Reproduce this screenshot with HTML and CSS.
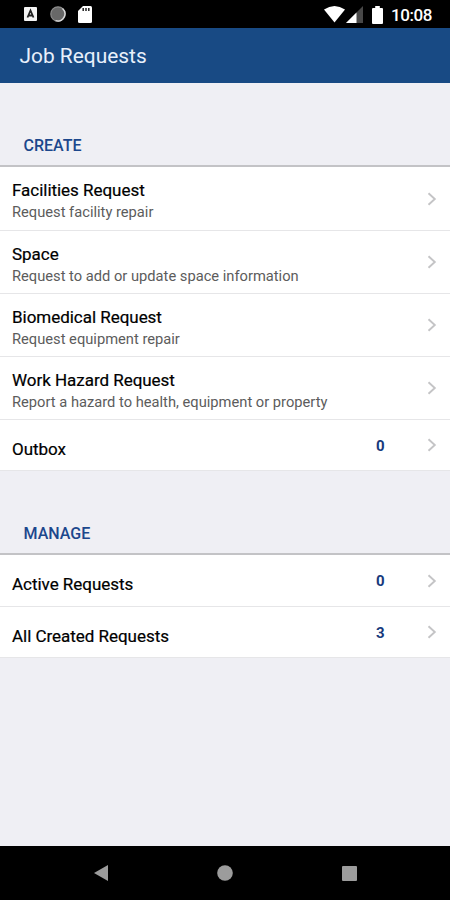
FILE: index.html
```html
<!DOCTYPE html>
<html lang="en">
<head>
    <meta charset="UTF-8">
    <meta name="viewport" content="width=device-width, initial-scale=1.0">
    <title>Job Requests</title>
    <link rel="stylesheet" href="styles.css">
</head>
<body>
    <svg class="symbols" width="0" height="0">
        <symbol id="chevron" viewBox="0 0 10 14">
            <path d="M1.5 1.2L7.8 7L1.5 12.8" fill="none" stroke="#c4c4c6" stroke-width="1.9"/>
        </symbol>
    </svg>
    <div class="status-bar">
        <div class="status-icons">
            <svg width="13" height="14" viewBox="0 0 13 14">
                <rect width="13" height="14" rx="1" fill="#f4f4f4"/>
                <path d="M3.5 10.5L6.5 3.5L9.5 10.5M4.5 8.5H8.5" fill="none" stroke="#222" stroke-width="1.8"/>
            </svg>
            <svg class="sync" width="16" height="16" viewBox="0 0 16 16">
                <circle cx="8" cy="8" r="7.2" fill="#686868" stroke="#8c8c8c" stroke-width="1.2"/>
                <path d="M12.5 2.5A7.2 7.2 0 0 1 5.5 14.7" fill="none" stroke="#ddd" stroke-width="1.3"/>
            </svg>
            <svg width="14" height="17" viewBox="0 0 14 17">
                <path d="M5 0H12.5Q14 0 14 1.5V15.5Q14 17 12.5 17H1.5Q0 17 0 15.5V5Z" fill="#fff"/>
                <path d="M5.2 2V5M8 2V5M10.8 2V5" stroke="#222" stroke-width="1.5"/>
            </svg>
        </div>
        <div class="status-right">
            <svg width="21" height="17" viewBox="0 0 21 17">
                <path d="M0 3.6Q10.5 -3.4 21 3.6L10.5 16.5Z" fill="#fff"/>
            </svg>
            <svg class="signal" width="17" height="17" viewBox="0 0 17 17">
                <path d="M0 17L17 0V17Z" fill="#484848"/>
                <path d="M0 17L10.5 6.5V17Z" fill="#fff"/>
            </svg>
            <svg class="battery" width="11" height="18" viewBox="0 0 11 18">
                <path d="M3.2 0H7.8V2H10Q11 2 11 3V17Q11 18 10 18H1Q0 18 0 17V3Q0 2 1 2H3.2Z" fill="#fff"/>
            </svg>
            <span class="clock">10:08</span>
        </div>
    </div>
    <header class="header">
        <h1>Job Requests</h1>
    </header>
    <main>
        <h2>CREATE</h2>
        <ul class="list">
            <li class="item">
                <div class="text">
                    <div class="name">Facilities Request</div>
                    <div class="desc">Request facility repair</div>
                </div>
                <svg class="chevron"><use href="#chevron"/></svg>
            </li>
            <li class="item">
                <div class="text">
                    <div class="name">Space</div>
                    <div class="desc">Request to add or update space information</div>
                </div>
                <svg class="chevron"><use href="#chevron"/></svg>
            </li>
            <li class="item">
                <div class="text">
                    <div class="name">Biomedical Request</div>
                    <div class="desc">Request equipment repair</div>
                </div>
                <svg class="chevron"><use href="#chevron"/></svg>
            </li>
            <li class="item">
                <div class="text">
                    <div class="name">Work Hazard Request</div>
                    <div class="desc">Report a hazard to health, equipment or property</div>
                </div>
                <svg class="chevron"><use href="#chevron"/></svg>
            </li>
            <li class="item short">
                <div class="name">Outbox</div>
                <span class="count">0</span>
                <svg class="chevron"><use href="#chevron"/></svg>
            </li>
        </ul>
        <h2>MANAGE</h2>
        <ul class="list">
            <li class="item short">
                <div class="name">Active Requests</div>
                <span class="count">0</span>
                <svg class="chevron"><use href="#chevron"/></svg>
            </li>
            <li class="item short">
                <div class="name">All Created Requests</div>
                <span class="count">3</span>
                <svg class="chevron"><use href="#chevron"/></svg>
            </li>
        </ul>
    </main>
    <footer class="nav-bar">
        <svg width="14" height="16" viewBox="0 0 14 16"><path d="M0 8L14 0V16Z" fill="#9c9c9c"/></svg>
        <svg width="16" height="16" viewBox="0 0 16 16"><circle cx="8" cy="8" r="7.8" fill="#9c9c9c"/></svg>
        <svg width="15" height="15" viewBox="0 0 15 15"><rect width="15" height="15" rx="1" fill="#9c9c9c"/></svg>
    </footer>
</body>
</html>
```

FILE: styles.css
```css
* {
    box-sizing: border-box;
}

body {
    display: flex;
    flex-direction: column;
    height: 900px;
    margin: 0;
    font-family: Roboto, sans-serif;
    background-color: #efeff4;
    overflow: hidden;
}

h1, h2, ul {
    margin: 0;
    padding: 0;
    font-weight: normal;
}

.symbols {
    display: none;
}

/* Status bar */
.status-bar {
    display: flex;
    flex: none;
    justify-content: space-between;
    height: 28px;
    padding: 0 18px 0 24px;
    background-color: #000;
    color: #fff;
}

.status-icons, .status-right {
    display: flex;
    align-items: center;
}

.status-icons {
    gap: 13px;
}

.sync {
    margin-right: -1px;
}

.status-right {
    padding-top: 1px;
}

.signal {
    margin-left: 1px;
}

.battery {
    margin: 0 8px 0 9px;
}

.clock {
    width: 41px;
    font-size: 17px;
    font-weight: 500;
    letter-spacing: -0.4px;
    white-space: nowrap;
}

/* Header */
.header {
    display: flex;
    flex: none;
    align-items: center;
    height: 55px;
    padding: 1px 19.5px 0;
    background-color: #184a84;
}

h1 {
    font-size: 20.9px;
    color: #e8f0fb;
}

/* Lists */
main {
    flex: 1;
}

h2 {
    height: 84px;
    padding: 52px 23.5px 0;
    border-bottom: 2px solid #c3c3c6;
    font-size: 16px;
    font-weight: 500;
    line-height: 22px;
    color: #1c478c;
}

.list {
    list-style: none;
}

.item {
    display: flex;
    align-items: center;
    height: 63px;
    padding: 0 13px 0 12px;
    border-bottom: 1px solid #e6e6e8;
    background-color: #fff;
}

.item:first-child {
    height: 64px;
}

.text {
    flex: 1;
    padding-top: 5px;
}

.name {
    font-size: 17px;
    line-height: 22px;
    letter-spacing: -0.03px;
    color: #000;
    -webkit-text-stroke: 0.2px #000;
}

.desc {
    font-size: 14.7px;
    line-height: 22px;
    color: #5c5c5c;
}

.item.short {
    height: 51px;
}

.item.short:first-child {
    height: 52px;
}

.short .name {
    flex: 1;
    padding-top: 7px;
}

.count {
    width: 9px;
    margin-right: 42px;
    padding-top: 1px;
    font-size: 15px;
    font-weight: 700;
    color: #183a7c;
}

.chevron {
    width: 10px;
    height: 14px;
}

/* Navigation bar */
.nav-bar {
    display: flex;
    flex: none;
    align-items: center;
    justify-content: space-between;
    height: 54px;
    padding: 0 93px 0 94px;
    background-color: #000;
}
```
